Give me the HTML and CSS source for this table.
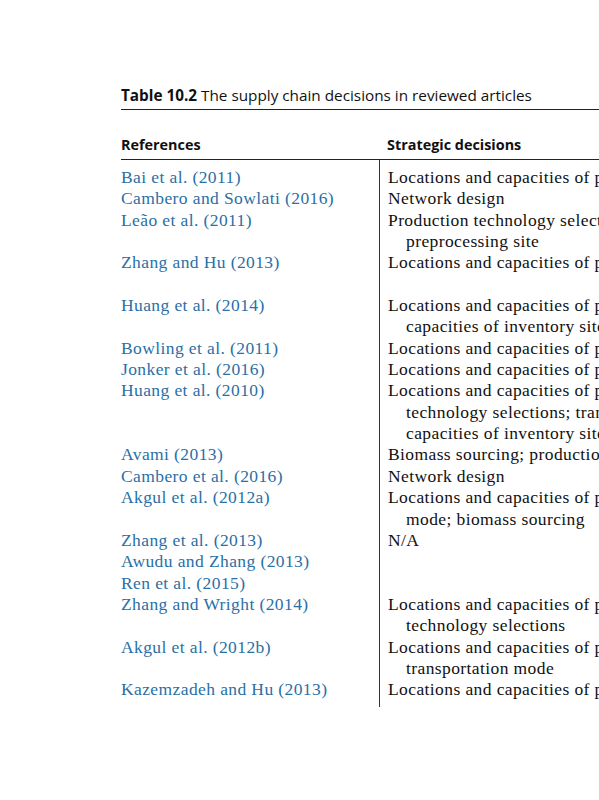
FILE: index.html
```html
<!DOCTYPE html>
<html>
<head>
<meta charset="utf-8">
<link rel="stylesheet" href="styles.css">
</head>
<body>
<div class="page">
  <div class="caption"><span class="label">Table 10.2</span> The supply chain decisions in reviewed articles</div>
  <div class="head">
    <div class="hcell">References</div>
    <div class="hcell">Strategic decisions</div>
  </div>
  <div class="body">
    <div class="ref">Bai et al. (2011)</div><div class="dec">Locations and capacities of production facilities</div>
    <div class="ref">Cambero and Sowlati (2016)</div><div class="dec">Network design</div>
    <div class="ref">Leão et al. (2011)</div><div class="dec">Production technology selections; locations of<br><span class="ind">preprocessing site</span></div>
    <div class="ref">Zhang and Hu (2013)</div><div class="dec">Locations and capacities of production facilities<br>&nbsp;</div>
    <div class="ref">Huang et al. (2014)</div><div class="dec">Locations and capacities of production facilities;<br><span class="ind">capacities of inventory sites</span></div>
    <div class="ref">Bowling et al. (2011)</div><div class="dec">Locations and capacities of production facilities</div>
    <div class="ref">Jonker et al. (2016)</div><div class="dec">Locations and capacities of production facilities</div>
    <div class="ref">Huang et al. (2010)</div><div class="dec">Locations and capacities of production facilities;<br><span class="ind">technology selections; transportation mode;</span><br><span class="ind">capacities of inventory sites</span></div>
    <div class="ref">Avami (2013)</div><div class="dec">Biomass sourcing; production technology selections</div>
    <div class="ref">Cambero et al. (2016)</div><div class="dec">Network design</div>
    <div class="ref">Akgul et al. (2012a)</div><div class="dec">Locations and capacities of production facilities; transportation<br><span class="ind">mode; biomass sourcing</span></div>
    <div class="ref">Zhang et al. (2013)<br>Awudu and Zhang (2013)<br>Ren et al. (2015)</div><div class="dec">N/A</div>
    <div class="ref">Zhang and Wright (2014)</div><div class="dec">Locations and capacities of production facilities;<br><span class="ind">technology selections</span></div>
    <div class="ref">Akgul et al. (2012b)</div><div class="dec">Locations and capacities of production facilities;<br><span class="ind">transportation mode</span></div>
    <div class="ref">Kazemzadeh and Hu (2013)</div><div class="dec last">Locations and capacities of production facilities</div>
  </div>
</div>
</body>
</html>
```
FILE: styles.css
```css
html, body {
  margin: 0;
  padding: 0;
  background: #ffffff;
  overflow: hidden;
  width: 599px;
  height: 800px;
}
.page {
  padding: 85px 0 0 121px;
  width: 760px;
}
.caption {
  font-family: "Open Sans", sans-serif;
  font-size: 15.3px;
  line-height: 20px;
  color: #111;
  padding-bottom: 4px;
  border-bottom: 1px solid #222;
  white-space: nowrap;
}
.caption .label {
  font-weight: 700;
}
.head {
  display: grid;
  grid-template-columns: 266px 1fr;
  margin-top: 25px;
  border-bottom: 1px solid #222;
}
.hcell {
  font-family: "Open Sans", sans-serif;
  font-weight: 700;
  font-size: 14.4px;
  line-height: 20px;
  color: #111;
  padding-bottom: 4px;
}
.body {
  display: grid;
  grid-template-columns: 258px 1fr;
  font-family: "Liberation Serif", serif;
  font-size: 17.5px;
  letter-spacing: 0.4px;
  line-height: 21.35px;
  color: #111;
}
.ref {
  color: #2a6fa6;
  white-space: nowrap;
}
.dec {
  border-left: 1px solid #333;
  padding-left: 8px;
  white-space: nowrap;
}
.body > div:nth-child(1), .body > div:nth-child(2) {
  padding-top: 7px;
}
.dec.last {
  padding-bottom: 6px;
}
.ind {
  padding-left: 18px;
}
```
